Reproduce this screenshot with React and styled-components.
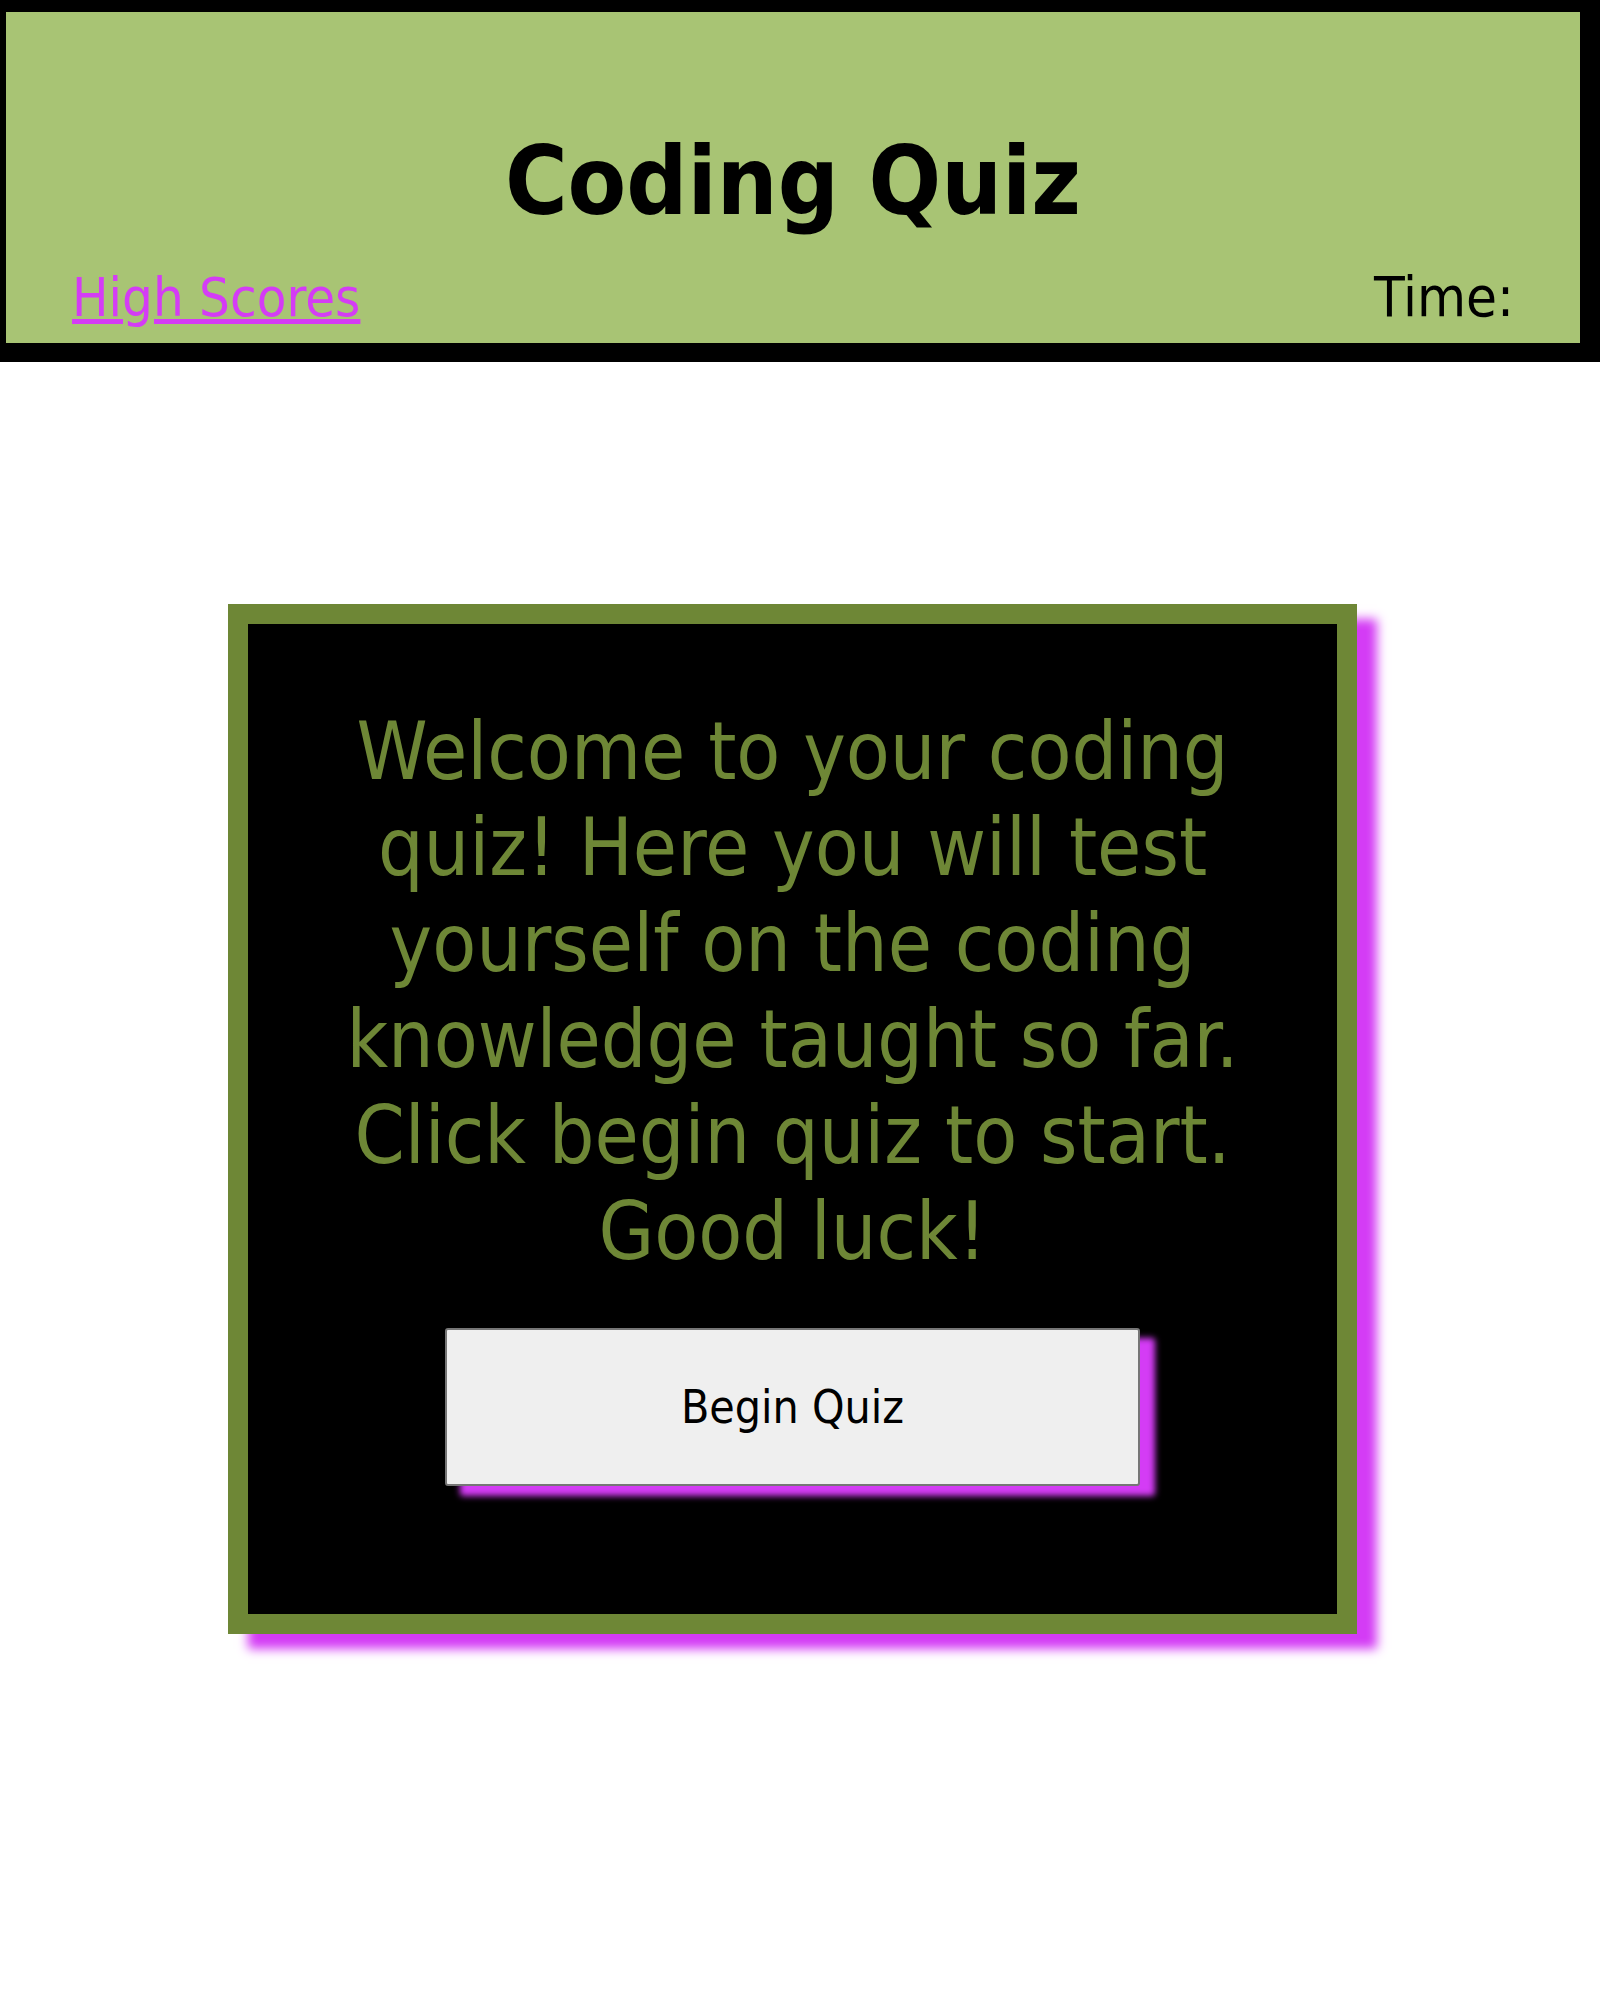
import React from 'react';
import styled, { createGlobalStyle } from 'styled-components';

const GlobalStyle = createGlobalStyle`
  body {
    margin: 0;
    background: #fff;
    font-family: "DejaVu Sans Condensed", "DejaVu Sans", sans-serif;
    font-stretch: condensed;
  }
`;

const Header = styled.header`
  background: #a8c474;
  border-style: solid;
  border-color: #000;
  border-width: 12px 20px 19px 6px;
  display: flex;
  flex-direction: column;
`;

const Title = styled.h1`
  margin: 0;
  padding-top: 122px;
  text-align: center;
  font-size: 95px;
  line-height: 1;
  font-weight: 700;
  color: #000;
`;

const Nav = styled.nav`
  display: flex;
  justify-content: space-between;
  align-items: baseline;
  margin-top: 36px;
  padding: 0 66px 13px;
  font-size: 54px;
  line-height: 64px;
`;

const ScoresLink = styled.a`
  color: #d43cf5;
  text-decoration: underline;
`;

const Timer = styled.span`
  color: #000;
  font-size: 56px;
`;

const Main = styled.main`
  padding: 242px 243px 120px 228px;
`;

const Card = styled.section`
  background: #000;
  border: 20px solid #6e8736;
  box-shadow: 20px 15px 10px #d43cf5;
  padding: 80px 0 128px;
  display: flex;
  flex-direction: column;
  align-items: center;
`;

const Intro = styled.p`
  margin: 0;
  max-width: 900px;
  text-align: center;
  font-size: 80px;
  line-height: 96px;
  color: #6e8736;
`;

const BeginButton = styled.button`
  margin-top: 48px;
  width: 695px;
  height: 158px;
  background: #efefef;
  border: 2px solid #767676;
  border-radius: 3px;
  box-shadow: 15px 10px 6px #d43cf5;
  font-family: inherit;
  font-stretch: condensed;
  font-size: 46px;
  color: #000;
  cursor: pointer;
`;

export default function App() {
  return (
    <>
      <GlobalStyle />
      <Header>
        <Title>Coding Quiz</Title>
        <Nav>
          <ScoresLink href="#">High Scores</ScoresLink>
          <Timer>Time:</Timer>
        </Nav>
      </Header>
      <Main>
        <Card>
          <Intro>
            Welcome to your coding quiz! Here you will test yourself on the coding
            knowledge taught so far. Click begin quiz to start. Good luck!
          </Intro>
          <BeginButton>Begin Quiz</BeginButton>
        </Card>
      </Main>
    </>
  );
}
